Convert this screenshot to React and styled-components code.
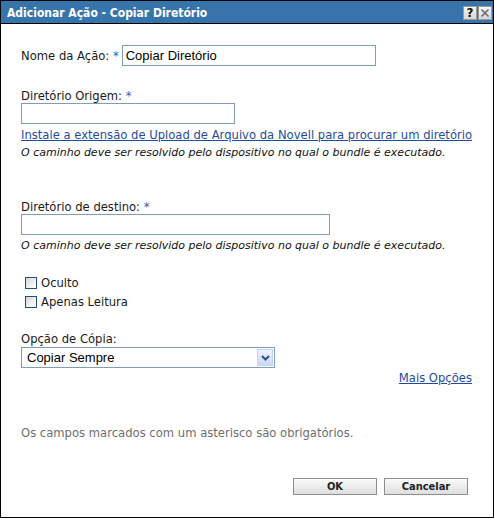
import React from 'react';
import styled, { createGlobalStyle } from 'styled-components';

const Global = createGlobalStyle`
  html, body { margin: 0; padding: 0; background: #fff; }
  body { font-family: "DejaVu Sans", Verdana, sans-serif; }
`;

const Window = styled.div`
  box-sizing: border-box;
  width: 494px;
  height: 518px;
  border: 1px solid #000;
  display: flex;
  flex-direction: column;
  background: #fff;
`;

const TitleBar = styled.div`
  box-sizing: border-box;
  height: 23px;
  background: #3674a9;
  border-bottom: 1px solid #000;
  display: flex;
  align-items: center;
  padding: 1px 1px 0 6px;
`;

const Title = styled.div`
  flex: 1;
  color: #fff;
  font: bold 12px "DejaVu Sans Condensed", "DejaVu Sans", sans-serif;
  padding-top: 1px;
`;

const TitleButton = styled.div`
  box-sizing: border-box;
  width: 14px;
  height: 14px;
  margin-left: 1px;
  border: 1px solid #9a9a9a;
  background: linear-gradient(#f6f6f6, #d6d6d6);
  display: flex;
  align-items: center;
  justify-content: center;
  color: #111;
  font: bold 12px "DejaVu Sans", sans-serif;
  line-height: 1;
`;

const Body = styled.div`
  flex: 1;
  display: flex;
  flex-direction: column;
  align-items: flex-start;
  padding: 21px 20px 0 20px;
  font-size: 11.6px;
  color: #1a1a1a;
`;

const Row = styled.div`
  display: flex;
  align-items: baseline;
`;

const Label = styled.div`
  line-height: ${p => p.$lh || 14}px;
  margin-top: ${p => p.$mt || 0}px;
`;

const Star = styled.span`
  color: #2f62b3;
`;

const TextInput = styled.div`
  box-sizing: border-box;
  width: ${p => p.$w}px;
  height: 21px;
  margin-left: ${p => p.$ml || 0}px;
  border: 1px solid #7f9db9;
  background: #fff;
  padding: 0 3px;
  font: 13px "Liberation Sans", Arial, sans-serif;
  color: #000;
  line-height: 19px;
`;

const Link = styled.a`
  display: block;
  color: #1f4c9e;
  text-decoration: underline;
  line-height: 14px;
  margin-top: ${p => p.$mt || 0}px;
  align-self: ${p => (p.$right ? 'flex-end' : 'flex-start')};
  margin-right: ${p => (p.$right ? 1 : 0)}px;
  cursor: pointer;
`;

const Hint = styled.div`
  font-size: 11px;
  font-style: italic;
  line-height: 14px;
  margin-top: 4px;
  color: #111;
`;

const CheckRow = styled.label`
  display: flex;
  align-items: center;
  line-height: 14px;
  margin-top: ${p => p.$mt || 0}px;
  padding-left: 4px;
`;

const Box = styled.span`
  box-sizing: border-box;
  width: 12px;
  height: 12px;
  margin-right: 4px;
  border: 1px solid #1d4f7f;
  background: linear-gradient(135deg, #d4d4d4 0%, #f2f2f2 60%, #ffffff 100%);
`;

const Select = styled.div`
  box-sizing: border-box;
  width: 254px;
  height: 21px;
  margin-top: 1px;
  border: 1px solid #7f9db9;
  display: flex;
  align-items: center;
  padding: 1px 1px 1px 5px;
  font: 13px "Liberation Sans", Arial, sans-serif;
  color: #000;
`;

const SelectText = styled.span`
  flex: 1;
`;

const ArrowBox = styled.span`
  box-sizing: border-box;
  width: 16px;
  height: 17px;
  border: 1px solid #c3d3f4;
  background: linear-gradient(#eef3fe, #c9d8f7);
  display: flex;
  align-items: center;
  justify-content: center;
`;

const Note = styled.div`
  color: #6e6e6e;
  line-height: 14px;
  margin-top: 41px;
`;

const Buttons = styled.div`
  align-self: flex-end;
  display: flex;
  gap: 7px;
  margin-top: 38px;
  margin-right: 5px;
`;

const Button = styled.button`
  box-sizing: border-box;
  width: 84px;
  height: 17px;
  padding: 0;
  border: 1px solid #8e8e8e;
  background: linear-gradient(#fbfbfb, #dedede);
  color: #222;
  font: bold 11px "DejaVu Sans Condensed", "DejaVu Sans", sans-serif;
  line-height: 15px;
`;

export default function App() {
  return (
    <>
      <Global />
      <Window>
        <TitleBar>
          <Title>Adicionar Ação - Copiar Diretório</Title>
          <TitleButton>?</TitleButton>
          <TitleButton>
            <svg width="10" height="10" viewBox="0 0 10 10">
              <path d="M1.5 1.5 L8.5 8.5 M8.5 1.5 L1.5 8.5" stroke="#6a6a6a" strokeWidth="1.6" />
            </svg>
          </TitleButton>
        </TitleBar>
        <Body>
          <Row>
            <Label>
              Nome da Ação: <Star>*</Star>
            </Label>
            <TextInput $w={254} $ml={3}>Copiar Diretório</TextInput>
          </Row>

          <Label $mt={24} $lh={13}>
            Diretório Origem: <Star>*</Star>
          </Label>
          <TextInput $w={214} />
          <Link $mt={4}>Instale a extensão de Upload de Arquivo da Novell para procurar um diretório</Link>
          <Hint>O caminho deve ser resolvido pelo dispositivo no qual o bundle é executado.</Hint>

          <Label $mt={41} $lh={13}>
            Diretório de destino: <Star>*</Star>
          </Label>
          <TextInput $w={309} />
          <Hint>O caminho deve ser resolvido pelo dispositivo no qual o bundle é executado.</Hint>

          <CheckRow $mt={23}>
            <Box />
            Oculto
          </CheckRow>
          <CheckRow $mt={5}>
            <Box />
            Apenas Leitura
          </CheckRow>

          <Label $mt={24} $lh={13}>Opção de Cópia:</Label>
          <Select>
            <SelectText>Copiar Sempre</SelectText>
            <ArrowBox>
              <svg width="9" height="6" viewBox="0 0 9 6">
                <path d="M1 1 L4.5 4.5 L8 1" fill="none" stroke="#2b4f8f" strokeWidth="2" />
              </svg>
            </ArrowBox>
          </Select>
          <Link $mt={3} $right>Mais Opções</Link>

          <Note>Os campos marcados com um asterisco são obrigatórios.</Note>

          <Buttons>
            <Button>OK</Button>
            <Button>Cancelar</Button>
          </Buttons>
        </Body>
      </Window>
    </>
  );
}
